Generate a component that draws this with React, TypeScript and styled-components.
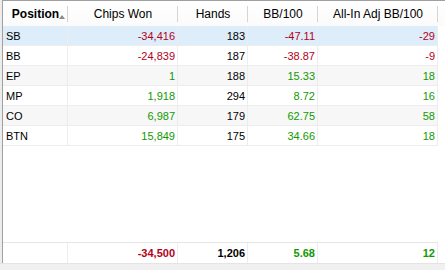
import React from "react";
import styled, { createGlobalStyle } from "styled-components";

const Global = createGlobalStyle`
  html, body { margin: 0; padding: 0; background: #ffffff; }
  body { font-family: "Liberation Sans", Arial, sans-serif; }
`;

const COLS = "65px 110px 70px 70px 120px";

const Frame = styled.div`
  width: 445px;
  height: 270px;
  display: flex;
  flex-direction: column;
  background: #ffffff;
  overflow: hidden;
`;

const Panel = styled.div`
  flex: 1;
  display: flex;
  flex-direction: column;
  margin-left: 2px;
  border-left: 1px solid #a0a0a0;
  border-top: 1px solid #a0a0a0;
  box-shadow: -2px 0 0 #ececec;
`;

const HeaderRow = styled.div`
  display: grid;
  grid-template-columns: ${COLS};
  height: 25px;
  background: linear-gradient(#ffffff, #fbfbfb);
`;

const HeadCell = styled.div<{ $bold?: boolean }>`
  display: flex;
  align-items: center;
  justify-content: center;
  font-size: 12px;
  font-weight: ${(p) => (p.$bold ? 700 : 400)};
  color: #000;
  position: relative;
  padding-top: 1px;
  padding-left: ${(p) => (p.$bold ? "6px" : "0")};
  &::after {
    content: "";
    position: absolute;
    right: 0;
    top: 5px;
    bottom: 4px;
    width: 1px;
    background: #d5d5d5;
  }
`;

const SortArrow = styled.span`
  width: 0;
  height: 0;
  border-left: 3px solid transparent;
  border-right: 3px solid transparent;
  border-bottom: 4px solid #8a8a8a;
  margin-top: 5px;
  margin-left: 0px;
`;

const Body = styled.div`
  flex: 1;
  display: flex;
  flex-direction: column;
`;

const Row = styled.div<{ $bg: string }>`
  display: grid;
  grid-template-columns: ${COLS};
  height: 20px;
  width: 435px;
  box-sizing: border-box;
  border-bottom: 1px solid #ededed;
  background: ${(p) => p.$bg};
`;

const Cell = styled.div<{ $align?: "left" | "right"; $color?: string; $bold?: boolean }>`
  display: flex;
  align-items: center;
  justify-content: ${(p) => (p.$align === "left" ? "flex-start" : "flex-end")};
  padding: 0 2px 0 3px;
  font-size: 11px;
  font-weight: ${(p) => (p.$bold ? 700 : 400)};
  color: ${(p) => p.$color || "#000"};
  border-right: 1px solid #ededed;
  box-sizing: border-box;
  white-space: nowrap;
`;

const TotalsRow = styled.div`
  display: grid;
  grid-template-columns: ${COLS};
  height: 21px;
  width: 435px;
  box-sizing: border-box;
  border-top: 1px solid #e6e6e6;
`;

const BottomBar = styled.div`
  height: 6px;
  background: #f0f0f0;
  border-top: 1px solid #e4e4e4;
`;

const RED = "#b40018";
const GREEN = "#109a00";

type R = { pos: string; chips: number; hands: number; bb: number; adj: number };

const rows: R[] = [
  { pos: "SB", chips: -34416, hands: 183, bb: -47.11, adj: -29 },
  { pos: "BB", chips: -24839, hands: 187, bb: -38.87, adj: -9 },
  { pos: "EP", chips: 1, hands: 188, bb: 15.33, adj: 18 },
  { pos: "MP", chips: 1918, hands: 294, bb: 8.72, adj: 16 },
  { pos: "CO", chips: 6987, hands: 179, bb: 62.75, adj: 58 },
  { pos: "BTN", chips: 15849, hands: 175, bb: 34.66, adj: 18 },
];

const fmt = (n: number) => n.toLocaleString("en-US");
const col = (n: number) => (n < 0 ? RED : GREEN);

export default function App() {
  return (
    <Frame>
      <Global />
      <Panel>
        <HeaderRow>
          <HeadCell $bold>
            Position<SortArrow />
          </HeadCell>
          <HeadCell>Chips Won</HeadCell>
          <HeadCell>Hands</HeadCell>
          <HeadCell>BB/100</HeadCell>
          <HeadCell>All-In Adj BB/100</HeadCell>
        </HeaderRow>
        <Body>
          {rows.map((r, i) => (
            <Row key={r.pos} $bg={i === 0 ? "#ddedf9" : i % 2 === 0 ? "#f7f7f7" : "#ffffff"}>
              <Cell $align="left">{r.pos}</Cell>
              <Cell $color={col(r.chips)}>{fmt(r.chips)}</Cell>
              <Cell>{r.hands}</Cell>
              <Cell $color={col(r.bb)}>{r.bb.toFixed(2)}</Cell>
              <Cell $color={col(r.adj)}>{r.adj}</Cell>
            </Row>
          ))}
        </Body>
        <TotalsRow>
          <Cell $align="left"></Cell>
          <Cell $bold $color={RED}>-34,500</Cell>
          <Cell $bold>1,206</Cell>
          <Cell $bold $color={GREEN}>5.68</Cell>
          <Cell $bold $color={GREEN}>12</Cell>
        </TotalsRow>
      </Panel>
      <BottomBar />
    </Frame>
  );
}
